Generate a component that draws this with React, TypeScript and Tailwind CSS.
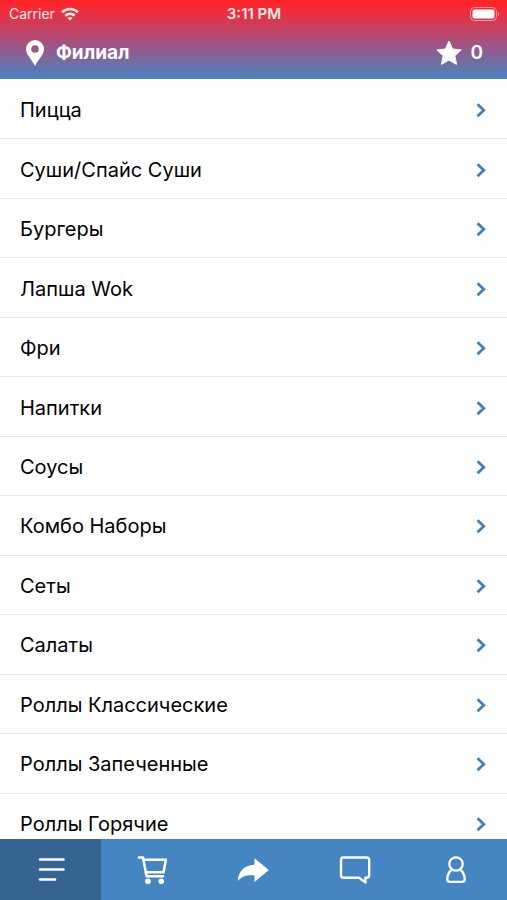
import { useState } from "react";
import type { ReactNode } from "react";

// Categorías del menú
const categories = [
  "Пицца",
  "Суши/Спайс Суши",
  "Бургеры",
  "Лапша Wok",
  "Фри",
  "Напитки",
  "Соусы",
  "Комбо Наборы",
  "Сеты",
  "Салаты",
  "Роллы Классические",
  "Роллы Запеченные",
  "Роллы Горячие",
];

// Pestañas de la barra inferior, cada una con su ícono
const tabs: { id: string; label: string; icon: ReactNode }[] = [
  {
    id: "menu",
    label: "Меню",
    icon: (
      <path d="M5 5.500H28.500M5 15.500H28.500M5 25.500H20" strokeWidth="2.600" />
    ),
  },
  {
    id: "cart",
    label: "Корзина",
    icon: (
      <>
        <path d="M2.800 3.500H7L10.600 22.300H27" strokeWidth="2.500" />
        <path d="M7.600 5.800H29.800L27.600 18.300H9.800" strokeWidth="2.500" />
        <circle cx="11.900" cy="27.300" r="2.800" fill="currentColor" stroke="none" />
        <circle cx="25.300" cy="27.300" r="2.800" fill="currentColor" stroke="none" />
      </>
    ),
  },
  {
    id: "share",
    label: "Поделиться",
    icon: (
      <path
        d="M17.5 4.300L31.800 16L17.500 28V21.400C10.500 20.600 5 22 0.600 27C1.800 16.500 8 11 17.500 10.800Z"
        fill="currentColor"
        stroke="none"
      />
    ),
  },
  {
    id: "chat",
    label: "Чат",
    icon: (
      <path
        d="M4.500 3.500H27.700C29.200 3.500 30.200 4.500 30.200 6V21.300C30.200 22.800 29.200 23.800 27.700 23.800H26.400V28.400L20 23.800H4.500C3 23.800 2 22.800 2 21.300V6C2 4.500 3 3.500 4.500 3.500Z"
        strokeWidth="2.4"
      />
    ),
  },
  {
    id: "profile",
    label: "Профиль",
    icon: (
      <>
        <circle cx="16" cy="10" r="6.700" strokeWidth="2.300" />
        <path
          d="M12 15.500C9 17.800 7.300 21 7.300 25.300C7.300 27.200 8 27.800 9.800 27.800H22.200C24 27.800 24.700 27.200 24.700 25.300C24.700 21 23 17.800 20 15.500"
          strokeWidth="2.300"
        />
      </>
    ),
  },
];

// Barra de estado del teléfono
function StatusBar() {
  return (
    <div className="grid h-[27px] grid-cols-3 items-center pr-2 pl-[9px] text-[14px] leading-5">
      <div className="flex items-center gap-1.5 opacity-90">
        <span>Carrier</span>
        <svg className="h-[14px] w-[18px]" viewBox="0 0 18 14" fill="none" stroke="currentColor" strokeWidth="2.6">
          <path d="M1 5.200C5.500 0.900 12.500 0.900 17 5.200" />
          <path d="M4.300 8.700C7 6.300 11 6.300 13.700 8.700" />
          <path d="M9 13.600L6.300 10.900C7.900 9.600 10.100 9.600 11.700 10.900Z" fill="currentColor" stroke="none" />
        </svg>
      </div>
      <span className="text-center text-[15px] font-semibold opacity-90">3:11 PM</span>
      <svg className="h-[14px] w-[30px] justify-self-end" viewBox="0 0 30 14" fill="none">
        <rect x="1.500" y="0.500" width="26" height="13" rx="4" stroke="white" strokeOpacity="0.500" />
        <rect x="3.500" y="2.500" width="22" height="9" rx="2" fill="white" />
        <path d="M29 5V9C30 8.500 30 5.500 29 5Z" fill="white" fillOpacity="0.600" />
      </svg>
    </div>
  );
}

export default function App() {
  // Pestaña seleccionada
  const [active, setActive] = useState("menu");

  return (
    <div className="flex h-screen flex-col bg-white font-['Inter','Liberation_Sans',sans-serif] text-black">
      {/* Encabezado con degradado */}
      <header className="shrink-0 bg-[linear-gradient(to_bottom,#ff252b_5%,#a8507e_53%,#4586c2)] text-white">
        <StatusBar />
        <div className="flex h-[52px] items-center justify-between pr-6 pl-[26px]">
          <button className="flex items-center gap-3 text-[19px] font-bold">
            <svg className="h-[26px] w-[18px]" viewBox="0 0 18 26" fill="currentColor">
              <path
                fillRule="evenodd"
                d="M9 0A9 9 0 0 0 0 9C0 15 6 19.500 9 26C12 19.500 18 15 18 9A9 9 0 0 0 9 0ZM9 5.200A3.800 3.800 0 1 1 9 12.800A3.800 3.800 0 1 1 9 5.200Z"
              />
            </svg>
            Филиал
          </button>
          <button className="flex items-center gap-2 text-[19px] font-semibold" aria-label="Бонусы: 0">
            <svg className="h-[26px] w-[26px]" viewBox="0 0 26 26" fill="currentColor" stroke="currentColor" strokeLinejoin="round">
              <path d="M13 1L16.600 9L25.200 10L18.800 15.700L20.600 24.400L13 20.100L5.400 24.400L7.200 15.700L0.800 10L9.400 9Z" />
            </svg>
            0
          </button>
        </div>
      </header>

      {/* Lista de categorías */}
      <main className="min-h-0 flex-1 overflow-y-auto pt-px [scrollbar-width:none]">
        <ul className="grid min-h-[773px] auto-rows-fr">
          {categories.map((name) => (
            <li key={name} className="border-b border-[#e6e6e8]">
              <a href="#" className="flex h-full items-center justify-between px-5 pt-0.5 text-[20px] leading-6">
                {name}
                <svg className="h-4 w-3" viewBox="0 0 12 16" fill="none" stroke="#4080bb" strokeWidth="2.800">
                  <path d="M2.500 2.200L8.800 8.200L2.500 14.200" />
                </svg>
              </a>
            </li>
          ))}
        </ul>
      </main>

      {/* Navegación inferior */}
      <nav className="grid h-[61px] shrink-0 grid-cols-5 bg-[#4586c2] text-white">
        {tabs.map((tab) => (
          <button
            key={tab.id}
            aria-label={tab.label}
            onClick={() => setActive(tab.id)}
            className={active === tab.id ? "flex items-center justify-center bg-[#366490]" : "flex items-center justify-center"}
          >
            <svg className="h-8 w-8" viewBox="0 0 32 32" fill="none" stroke="currentColor" strokeLinecap="round" strokeLinejoin="round">
              {tab.icon}
            </svg>
          </button>
        ))}
      </nav>
    </div>
  );
}
